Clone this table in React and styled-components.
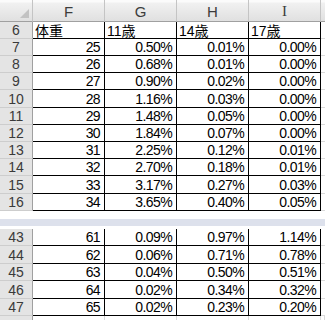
import React from "react";
import styled, { createGlobalStyle } from "styled-components";

const Global = createGlobalStyle`
  html, body { margin: 0; padding: 0; background: #ffffff; }
  body { font-family: "Liberation Sans", "Noto Sans CJK JP", sans-serif; }
  * { box-sizing: border-box; }
`;

const Sheet = styled.div`
  width: 325px;
  height: 320px;
  overflow: hidden;
  display: flex;
  flex-direction: column;
  font-family: "Liberation Sans", "Noto Sans CJK JP", sans-serif;
  color: #000;
`;

const Row = styled.div`
  display: grid;
  grid-template-columns: 33px 72px 72px 72px 72px 4px;
  height: ${(p) => p.$h}px;
  flex: none;
`;

const ColHead = styled.div`
  display: flex;
  align-items: center;
  justify-content: center;
  padding-top: 2px;
  font-size: 15px;
  color: #3c3c3c;
  background: linear-gradient(#fbfbfb 0, #fbfbfb 2px, #f1f1f1 3px, #e0e0e0);
  border-right: 1px solid #c4c4c4;
  border-bottom: 1px solid #a0a0a0;
  font-family: ${(p) => (p.$serif ? '"Liberation Serif", serif' : '"Liberation Sans", sans-serif')};
`;

const Corner = styled(ColHead)`
  position: relative;
  &::after {
    content: "";
    position: absolute;
    right: 3px;
    bottom: 3px;
    width: 0;
    height: 0;
    border-left: 9px solid transparent;
    border-bottom: 9px solid #c2c2c2;
  }
`;

const SliverHead = styled.div`
  background: linear-gradient(#fbfbfb 0, #fbfbfb 2px, #f1f1f1 3px, #e0e0e0);
  border-bottom: 1px solid #a0a0a0;
`;

const RowHead = styled.div`
  display: flex;
  align-items: center;
  justify-content: center;
  font-size: 14px;
  color: #3a3a3a;
  background: #e4e4e4;
  border-right: 1px solid #a0a0a0;
  border-bottom: 1px solid #cdcdcd;
`;

const Cell = styled.div`
  display: flex;
  align-items: center;
  justify-content: ${(p) => (p.$left ? "flex-start" : "flex-end")};
  padding: 0 4px 0 2px;
  white-space: nowrap;
  overflow: hidden;
  font-size: 14px;
  letter-spacing: ${(p) => (p.$left ? "0" : "-0.6px")};
  border-right: 1px solid #000;
  border-bottom: 1px solid #000;
`;

const Sliver = styled.div`
  border-bottom: 1px solid #dadada;
`;

const Gap = styled.div`
  flex: none;
  height: 18px;
  background: linear-gradient(
    #ffffff 0,
    #ffffff 8px,
    #dde1ec 8px,
    #dde1ec 15px,
    #ffffff 15px
  );
`;

const TailHead = styled.div`
  background: #e4e4e4;
  border-right: 1px solid #a0a0a0;
`;

const TailCell = styled.div`
  border-right: 1px solid #dadada;
`;

const upper = [
  [7, 25, "0.50%", "0.01%", "0.00%", 17],
  [8, 26, "0.68%", "0.01%", "0.00%", 17],
  [9, 27, "0.90%", "0.02%", "0.00%", 17],
  [10, 28, "1.16%", "0.03%", "0.00%", 18],
  [11, 29, "1.48%", "0.05%", "0.00%", 17],
  [12, 30, "1.84%", "0.07%", "0.00%", 17],
  [13, 31, "2.25%", "0.12%", "0.01%", 17],
  [14, 32, "2.70%", "0.18%", "0.01%", 17],
  [15, 33, "3.17%", "0.27%", "0.03%", 18],
  [16, 34, "3.65%", "0.40%", "0.05%", 17],
];

const lower = [
  [43, 61, "0.09%", "0.97%", "1.14%", 17],
  [44, 62, "0.06%", "0.71%", "0.78%", 18],
  [45, 63, "0.04%", "0.50%", "0.51%", 17],
  [46, 64, "0.02%", "0.34%", "0.32%", 18],
  [47, 65, "0.02%", "0.23%", "0.20%", 17],
];

function DataRow({ r }) {
  const [n, w, g, h, i, ht] = r;
  return (
    <Row $h={ht}>
      <RowHead>{n}</RowHead>
      <Cell>{w}</Cell>
      <Cell>{g}</Cell>
      <Cell>{h}</Cell>
      <Cell>{i}</Cell>
      <Sliver />
    </Row>
  );
}

export default function App() {
  return (
    <>
      <Global />
      <Sheet>
        <Row $h={22}>
          <Corner />
          <ColHead>F</ColHead>
          <ColHead>G</ColHead>
          <ColHead>H</ColHead>
          <ColHead $serif>I</ColHead>
          <SliverHead />
        </Row>
        <Row $h={17}>
          <RowHead>6</RowHead>
          <Cell $left>体重</Cell>
          <Cell $left>11歳</Cell>
          <Cell $left>14歳</Cell>
          <Cell $left>17歳</Cell>
          <Sliver />
        </Row>
        {upper.map((r) => (
          <DataRow key={r[0]} r={r} />
        ))}
        <Gap />
        {lower.map((r) => (
          <DataRow key={r[0]} r={r} />
        ))}
        <Row $h={8}>
          <TailHead />
          <TailCell />
          <TailCell />
          <TailCell />
          <TailCell />
          <TailCell />
        </Row>
      </Sheet>
    </>
  );
}
